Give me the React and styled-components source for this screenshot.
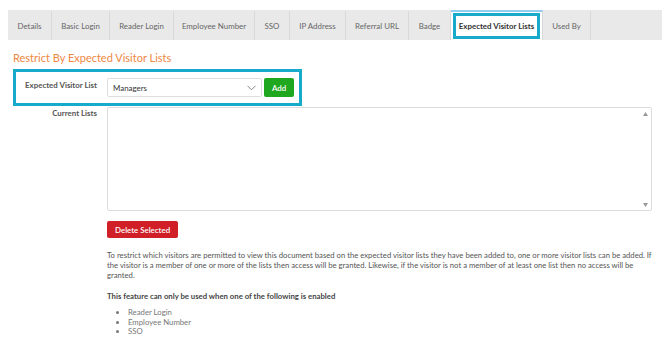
import React from 'react';
import styled, { createGlobalStyle } from 'styled-components';

const Global = createGlobalStyle`
  body { margin: 0; background: #fff; font-family: Lato, "Open Sans", sans-serif; color: #555; }
`;

const Page = styled.div`
  width: 670px;
  height: 340px;
  overflow: hidden;
  padding-top: 10px;
  box-sizing: border-box;
`;

const TabBar = styled.div`
  display: flex;
  margin-left: 8px;
  width: 654px;
  height: 30px;
  background: #e9e9e9;
`;

const Tab = styled.div`
  position: relative;
  display: flex;
  align-items: center;
  justify-content: center;
  width: ${p => p.w}px;
  box-sizing: border-box;
  font-size: 7.9px;
  font-weight: ${p => (p.active ? 700 : 400)};
  color: ${p => (p.active ? '#333' : '#666')};
  background: ${p => (p.active ? '#fff' : 'transparent')};
  border-right: 1px solid #d9d9d9;
  border-top: 2px solid ${p => (p.active ? '#8fcdf2' : 'transparent')};
  white-space: nowrap;
`;

const Highlight = styled.div`
  position: absolute;
  border: 3px solid #17aacb;
  pointer-events: none;
`;

const TabHighlight = styled(Highlight)`
  left: 2px;
  right: 2px;
  top: 1px;
  bottom: 1px;
`;

const Content = styled.div`
  padding: 0 13px;
`;

const Title = styled.h2`
  margin: 11px 0 0;
  font-size: 11px;
  font-weight: 400;
  color: #f0873f;
  line-height: 14px;
`;

const FormRow = styled.div`
  position: relative;
  display: grid;
  grid-template-columns: 84px 1fr;
  column-gap: 10px;
  margin-top: ${p => p.top}px;
`;

const RowHighlight = styled(Highlight)`
  left: 0;
  top: -9px;
  width: 289px;
  height: 37px;
  box-sizing: border-box;
`;

const Label = styled.label`
  text-align: right;
  font-size: 7.9px;
  font-weight: 700;
  color: #555;
  padding-top: ${p => p.pad}px;
`;

const Controls = styled.div`
  display: flex;
  gap: 2px;
  align-items: stretch;
`;

const Select = styled.div`
  display: flex;
  align-items: center;
  justify-content: space-between;
  width: 155px;
  height: 19px;
  box-sizing: border-box;
  padding: 0 5px 0 5px;
  border: 1px solid #dedede;
  border-radius: 2px;
  font-size: 7.9px;
  color: #333;
`;

const Button = styled.button`
  border: none;
  border-radius: 2px;
  color: #fff;
  font-family: inherit;
  font-size: 7.9px;
  font-weight: 600;
  height: ${p => p.h}px;
  padding: 0 ${p => p.px}px;
  background: ${p => p.bg};
  cursor: pointer;
`;

const ListBox = styled.div`
  position: relative;
  width: 545px;
  height: 104px;
  box-sizing: border-box;
  border: 1px solid #dcdcdc;
  border-radius: 2px;
`;

const Arrow = styled.svg`
  position: absolute;
  right: 3px;
  ${p => (p.down ? 'bottom: 3px;' : 'top: 4px;')}
`;

const Body = styled.div`
  margin-left: 94px;
`;

const Actions = styled.div`
  margin-top: 10px;
  display: flex;
`;

const Para = styled.p`
  margin: 12px 0 0;
  width: 547px;
  font-size: 7.7px;
  line-height: 10px;
  color: #555;
`;

const Strong = styled.p`
  margin: 11px 0 0;
  font-size: 7.75px;
  line-height: 10px;
  font-weight: 700;
  color: #444;
`;

const List = styled.ul`
  margin: 7px 0 0;
  padding-left: 21px;
  font-size: 7.75px;
  line-height: 9.5px;
  color: #777;
  li::marker { font-size: 8px; }
`;

const tabs = [
  ['Details', 44],
  ['Basic Login', 58],
  ['Reader Login', 64],
  ['Employee Number', 81],
  ['SSO', 35],
  ['IP Address', 56],
  ['Referral URL', 63],
  ['Badge', 42],
  ['Expected Visitor Lists', 92],
  ['Used By', 48],
];

export default function App() {
  return (
    <Page>
      <Global />
      <TabBar>
        {tabs.map(([t, w]) => {
          const active = t === 'Expected Visitor Lists';
          return (
            <Tab key={t} w={w} active={active}>
              {t}
              {active && <TabHighlight />}
            </Tab>
          );
        })}
      </TabBar>
      <Content>
        <Title>Restrict By Expected Visitor Lists</Title>
        <FormRow top={13}>
          <RowHighlight />
          <Label pad={2}>Expected Visitor List</Label>
          <Controls>
            <Select>
              Managers
              <svg width="9" height="6" viewBox="0 0 9 6">
                <polyline points="0.5 0.8 4.5 4.8 8.5 0.8" fill="none" stroke="#888" strokeWidth="1" />
              </svg>
            </Select>
            <Button bg="#1fa71f" h={19} px={8}>Add</Button>
          </Controls>
        </FormRow>
        <FormRow top={10}>
          <Label pad={1}>Current Lists</Label>
          <ListBox>
            <Arrow width="5" height="4" viewBox="0 0 5 4"><polygon points="2.5 0 5 4 0 4" fill="#999" /></Arrow>
            <Arrow down width="5" height="4" viewBox="0 0 5 4"><polygon points="0 0 5 0 2.5 4" fill="#999" /></Arrow>
          </ListBox>
        </FormRow>
        <Body>
          <Actions>
            <Button bg="#d01f27" h={17} px={8}>Delete Selected</Button>
          </Actions>
          <Para>
            To restrict which visitors are permitted to view this document based on the expected visitor lists they have been added to, one or more visitor lists can be added. If the visitor is a member of one or more of the lists then access will be granted. Likewise, if the visitor is not a member of at least one list then no access will be granted.
          </Para>
          <Strong>This feature can only be used when one of the following is enabled</Strong>
          <List>
            <li>Reader Login</li>
            <li>Employee Number</li>
            <li>SSO</li>
          </List>
        </Body>
      </Content>
    </Page>
  );
}
